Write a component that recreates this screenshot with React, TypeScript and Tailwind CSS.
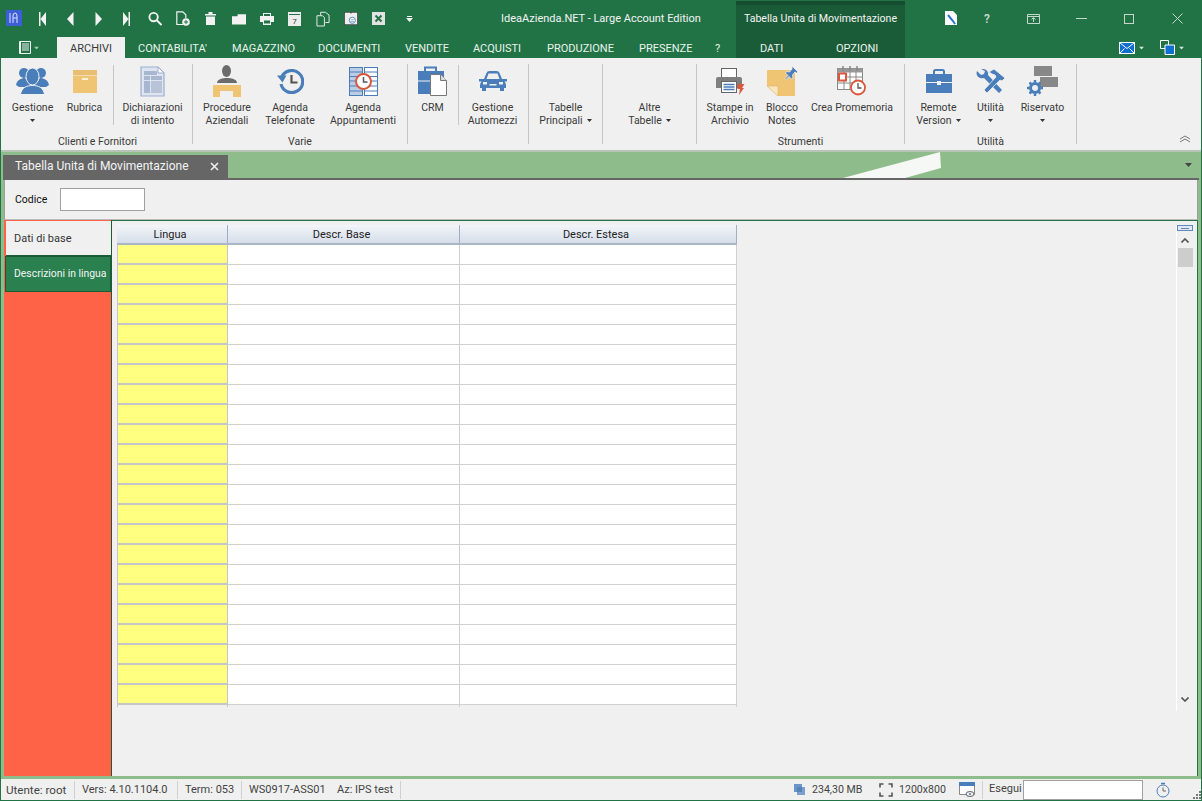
import React from "react";

const F = "font-['Roboto','Noto_Sans',sans-serif]";

const Caret = ({ className = "" }: { className?: string }) => (
  <svg width="7" height="4" viewBox="0 0 7 4" className={className}><path d="M0 0h7L3.5 4z" fill="currentColor" /></svg>
);

const Blue = "#4a7eba";

const IconPeople = () => (
  <svg width="33" height="28" viewBox="0 0 33 28">
    <g fill={Blue}>
      <circle cx="8" cy="6" r="5" /><circle cx="25" cy="6" r="5" />
      <path d="M0 18c1-5 5-7 9-7l7 7v2H3zM33 18c-1-5-5-7-9-7l-7 7v2h13z" />
      <path d="M4.500 27.500c1-7 6-9 12-9s11 2 12 9z" stroke="#f0f0f0" strokeWidth="1" />
      <ellipse cx="16.500" cy="9.500" rx="6.500" ry="8.500" stroke="#f0f0f0" strokeWidth="1" />
    </g>
  </svg>
);
const IconBox = () => (
  <svg width="24" height="23" viewBox="0 0 24 23">
    <rect width="24" height="5" fill="#e8be70" />
    <rect width="24" height="18" y="5.500" fill="#efc574" />
    <rect width="6" height="2" x="9" y="8" fill="#fbf0dc" />
  </svg>
);
const IconDoc = () => (
  <svg width="25" height="31" viewBox="0 0 25 31">
    <path d="M1 1h17l6 6v23H1z" fill="#dfe4f1" stroke="#9fadcc" strokeWidth="1.200" />
    <path d="M18 1v6h6z" fill="#fff" stroke="#9fadcc" />
    <rect x="4" y="5" width="13" height="4" fill="#a9b6d0" />
    <rect x="4" y="10" width="6" height="4" fill="#a9b6d0" /><rect x="11" y="10" width="11" height="4" fill="#a9b6d0" />
    <rect x="4" y="15" width="6" height="12" fill="#a9b6d0" /><rect x="11" y="15" width="11" height="12" fill="#b8c3da" />
  </svg>
);
const IconDesk = () => (
  <svg width="29" height="32" viewBox="0 0 29 32">
    <ellipse cx="13.500" cy="6" rx="4.500" ry="6" fill="#6b6b6b" />
    <path d="M4 18c0-4 6-5 10-5s10 1 10 5z" fill="#6b6b6b" />
    <path d="M0 20h28v12H20v-6H7v6H0z" fill="#efc574" />
  </svg>
);
const IconHistory = () => (
  <svg width="27" height="25" viewBox="0 0 27 25">
    <path d="M4.500 8.500A11 11 0 1 1 4 15" fill="none" stroke={Blue} strokeWidth="3.200" />
    <path d="M0 6.500h9.500l-4 7z" fill={Blue} />
    <path d="M14.500 6v7.500h6" fill="none" stroke="#555" strokeWidth="2.200" />
  </svg>
);
const IconAppt = () => (
  <svg width="29" height="29" viewBox="0 0 29 29">
    <rect x=".5" y=".5" width="13" height="28" fill="#bccce4" stroke={Blue} />
    <rect x="15.500" y=".5" width="13" height="28" fill="#fff" stroke={Blue} />
    <path d="M.5 5h13M.5 9.500h13M.5 14h13M.5 19h13M.5 24h13M15.500 5h13M15.500 9.500h13M15.500 14h13M15.500 19h13M15.500 24h13" stroke={Blue} />
    <circle cx="14.500" cy="14.500" r="7.500" fill="#fff" stroke="#d9573c" strokeWidth="2" />
    <path d="M14.500 10v5h4" fill="none" stroke="#555" strokeWidth="1.500" />
  </svg>
);
const IconCrm = () => (
  <svg width="29" height="30" viewBox="0 0 29 30">
    <path d="M7 5V1.500h11V5" fill="none" stroke={Blue} strokeWidth="2" />
    <rect x="0" y="5" width="26" height="23" fill={Blue} />
    <path d="M12.500 8.500h10l6 6v15h-16z" fill="#fff" stroke="#777" />
    <path d="M22.500 8.500v6h6" fill="#ddd" stroke="#777" />
    <path d="M0 15h12" stroke="#f0f0f0" />
  </svg>
);
const IconCar = () => (
  <svg width="28" height="20" viewBox="0 0 28 20">
    <path d="M5 8l2.500-6q.5-2 3-2h7q2.500 0 3 2L23 8h5v2.500h-2.500Q27 12 27 14v3h-2v3h-4v-3H7v3H3v-3H1v-3q0-1.500 1.500-3.500H0V8z" fill={Blue} />
    <path d="M7.500 8l2-5.500h9l2 5.500z" fill="#f0f0f0" />
    <rect x="4" y="11" width="4" height="2.500" fill="#f0f0f0" /><rect x="20" y="11" width="4" height="2.500" fill="#f0f0f0" /><rect x="10.500" y="13" width="7" height="1.500" fill="#f0f0f0" />
  </svg>
);
const IconPrinter = () => (
  <svg width="29" height="27" viewBox="0 0 29 27">
    <rect x="5.500" y=".5" width="15" height="9" fill="#fff" stroke="#666" />
    <path d="M0 11q0-2 2-2h22q2 0 2 2v9H0z" fill="#7f7f7f" />
    <rect x="5.500" y="13.500" width="15" height="11" fill="#fff" stroke="#666" />
    <path d="M7.500 16.500h11M7.500 19h11M7.500 21.500h11" stroke={Blue} strokeWidth="1.300" />
    <path d="M21.500 16h7l-2.500 4h2l-5 7 1-6h-2.500z" fill="#d9573c" />
  </svg>
);
const IconNote = () => (
  <svg width="31" height="31" viewBox="0 0 31 31">
    <path d="M0 4h28v26H11L0 20z" fill="#efc574" />
    <path d="M11 30V20H0z" fill="#f8e6c0" stroke="#e0b566" strokeWidth=".6" />
    <path d="M25 0l6 6-1.500 1-1.500-1-2.500 3 .5 3-1.500 1-2.500-2.500-3 3-1-1 3-3-2.500-2.500 1-1.500 3 .5 2.500-3z" fill={Blue} stroke="#f0f0f0" strokeWidth=".8" />
  </svg>
);
const IconCal = () => (
  <svg width="30" height="30" viewBox="0 0 30 30">
    <rect x=".5" y="2.500" width="25" height="21" fill="#fff" stroke="#888" />
    <rect x=".5" y="2.500" width="25" height="4" fill="#999" />
    <path d="M6 0v5M13 0v5M20 0v5" stroke="#888" strokeWidth="1.500" />
    <path d="M.5 11h25M.5 17h25M7 6v18M13 6v18M19 6v18" stroke="#888" />
    <rect x="2" y="7.500" width="7" height="7" fill="#fff" stroke="#d9573c" strokeWidth="2" />
    <circle cx="21" cy="21.500" r="7" fill="#fff" stroke="#d9573c" strokeWidth="1.800" />
    <path d="M21 17v5h3.500" fill="none" stroke="#555" strokeWidth="1.300" />
  </svg>
);
const IconCase = () => (
  <svg width="26" height="24" viewBox="0 0 26 24">
    <path d="M8 5V2.500q0-1.500 1.500-1.500h7Q18 1 18 2.500V5" fill="none" stroke={Blue} strokeWidth="2" />
    <path d="M0 5h26v8H15v-1h-4v1H0zM0 14h11v2h4v-2h11v10H0z" fill={Blue} />
  </svg>
);
const IconTools = () => (
  <svg width="29" height="25" viewBox="0 0 29 25">
    <path d="M1 2l4 4 3-1 1-3-4-2C9-1 13 2 12 6l14 15-3 3L8 9C4 10-1 7 1 2z" fill={Blue} />
    <path d="M13 3l5-3 11 9-3 3-2-1-13 13-3-3 12-13-1-2-3-1z" fill={Blue} stroke="#f0f0f0" strokeWidth=".8" />
  </svg>
);
const IconReserved = () => (
  <svg width="32" height="30" viewBox="0 0 32 30">
    <rect x="7" y="0" width="18" height="10" fill="#888" />
    <rect x="13" y="11" width="18" height="10" fill="#888" />
    <circle cx="8" cy="22" r="4.500" fill="#f0f0f0" stroke={Blue} strokeWidth="3" />
    <path d="M8 14v2.500M8 27.500V30M0 22h2.500M13.500 22H16M2.500 16.500l2 2M11.500 25.500l2 2M2.500 27.500l2-2M11.500 18.500l2-2" stroke={Blue} strokeWidth="2.500" />
  </svg>
);

const W = "#f2f2f2";
const QA: React.ReactNode[] = [
  <svg width="7" height="14" viewBox="0 0 7 14"><path d="M0 0h1.500v14H0zM7 0v14L1.500 7z" fill={W} /></svg>,
  <svg width="7" height="14" viewBox="0 0 7 14"><path d="M6.500 0v14L0 7z" fill={W} /></svg>,
  <svg width="7" height="14" viewBox="0 0 7 14"><path d="M.5 0v14L7 7z" fill={W} /></svg>,
  <svg width="7" height="14" viewBox="0 0 7 14"><path d="M5.500 0H7v14H5.500zM0 0v14l5.500-7z" fill={W} /></svg>,
  <svg width="15" height="15" viewBox="0 0 15 15"><circle cx="6" cy="6" r="4.500" fill="none" stroke={W} strokeWidth="2" /><path d="M9.500 9.500L14.500 14.500" stroke={W} strokeWidth="2.200" /></svg>,
  <svg width="14" height="15" viewBox="0 0 14 15"><path d="M7 13.500H.8V.8h6l3 3V7" fill="none" stroke={W} strokeWidth="1.200" /><circle cx="10" cy="11" r="3.800" fill={W} /><path d="M8 11h4M10 9v4" stroke="#217346" /></svg>,
  <svg width="11" height="13" viewBox="0 0 11 13"><path d="M0 2h11v1.500H0zM3.500 0h4v2h-4zM1 4.500h9V13H1z" fill={W} /></svg>,
  <svg width="15" height="12" viewBox="0 0 15 12"><path d="M0 3h6V1h9v11H0z" fill={W} /></svg>,
  <svg width="14" height="12" viewBox="0 0 14 12"><path d="M3 0h8v3h3v6h-3v3H3V9H0V3h3z" fill={W} /><path d="M4 7.500h6v3H4zM4 1h6v2H4z" fill="#217346" /></svg>,
  <svg width="13" height="14" viewBox="0 0 13 14"><path d="M0 0h13v14H0z" fill="#ececec" /><path d="M1 2.500h11" stroke="#217346" /><text x="6.500" y="11.500" fontSize="7.500" textAnchor="middle" fill="#333">7</text></svg>,
  <svg width="15" height="16" viewBox="0 0 15 16"><path d="M1 4.500h6l2 2v9H1z M5 4V.8h5l4 3v8h-4" fill="none" stroke={W} /></svg>,
  <svg width="16" height="15" viewBox="0 0 16 15"><rect width="16" height="15" fill="#444" /><path d="M1 1h6l1 1 1-1h6v13H1z" fill="#eee" /><circle cx="9.500" cy="9.500" r="3.500" fill="#fff" stroke={Blue} /><path d="M7.500 9h4M7.500 11h4" stroke={Blue} strokeWidth=".7" /></svg>,
  <svg width="13" height="13" viewBox="0 0 13 13"><rect width="13" height="13" fill="#e2e2e2" /><path d="M3.500 3.500l6 6M9.500 3.500l-6 6" stroke="#217346" strokeWidth="2" /></svg>,
];

const RC = "text-[#333] w-[5px] h-[3px]";

type BtnProps = { w: number; icon: React.ReactNode; l1: string; l2?: string; caret?: boolean };
const Btn = ({ w, icon, l1, l2, caret }: BtnProps) => (
  <div className="flex flex-col items-center shrink-0" style={{ width: w }}>
    <div className="h-[34px] flex items-center justify-center">{icon}</div>
    <div className="h-[13px] mt-[3px] leading-[13px] whitespace-nowrap">{l1}</div>
    <div className="h-[13px] leading-[13px] whitespace-nowrap flex items-center justify-center gap-[4px]">
      {l2 && <span>{l2}</span>}
      {caret && <Caret className={RC} />}
    </div>
  </div>
);
const TextBtn = ({ w, l1, l2 }: { w: number; l1: string; l2: string }) => (
  <div className="flex flex-col items-center shrink-0" style={{ width: w }}>
    <div className="h-[13px] mt-[37px] leading-[13px]">{l1}</div>
    <div className="h-[13px] leading-[13px] flex items-center gap-[4px]"><span>{l2}</span><Caret className={RC} /></div>
  </div>
);
const Sep = ({ className = "" }: { className?: string }) => <div className={`w-px h-[60px] mt-px bg-[#c6c6c6] shrink-0 ${className}`} />;
const Group = ({ w, label, children }: { w: number; label?: string; children: React.ReactNode }) => (
  <div className="flex flex-col shrink-0 border-r border-[#c6c6c6] mt-[6px] h-[80px]" style={{ width: w }}>
    <div className="flex h-[70px] shrink-0">{children}</div>
    <div className="h-[10px] leading-[15px] text-center">{label}</div>
  </div>
);

const Cols = ["w-[111px]", "w-[232px]", "w-[277px]"];

export default function App() {
  return (
    <div className={`${F} w-[1202px] h-[801px] overflow-hidden bg-[#217346] text-[11px] text-[#3a3a3a] flex flex-col`}>
      {/* title bar */}
      <div className="h-[37px] flex bg-[#217346] text-[#f4f4f4] shrink-0">
        <svg width="16" height="16" viewBox="0 0 16 16" className="ml-[6px] mt-[10px] shrink-0">
          <rect width="16" height="16" fill="#3d5fd6" />
          <path d="M4 3v10M7 13V6q0-3 2-3t2 3v7M7 8h4" fill="none" stroke="#dfe6ff" />
        </svg>
        <div className="flex items-center gap-[13px] h-[37px] ml-[13px] w-[381px] shrink-0">
          {QA.map((q, i) => (
            <span key={i} className="w-[14px] flex justify-center shrink-0 mx-[0.5px]">{q}</span>
          ))}
          <svg width="7" height="6" viewBox="0 0 7 6" className="ml-[7px] shrink-0"><path d="M1 0h5v1H1zM0 2h7L3.500 6z" fill={W} /></svg>
        </div>
        <div className="w-[320px] pl-[85px] leading-[37px] whitespace-nowrap shrink-0">IdeaAzienda.NET - Large Account Edition</div>
        <div className="w-[169px] h-[36px] mt-px bg-[#1b5c38] border-t-[4px] border-[#174d2f] text-center text-[10.6px] leading-[27px] whitespace-nowrap shrink-0">Tabella Unita di Movimentazione</div>
        <div className="flex-1 flex items-center text-[#c5d8cc] h-[37px]">
          <svg width="13" height="15" viewBox="0 0 13 15" className="ml-[40px]"><path d="M0 0h8l4 4v10H0z" fill="#fff" /><path d="M3 4l5 6 2 3" stroke="#2f6fd0" strokeWidth="2" fill="none" /></svg>
          <span className="ml-[24px] w-[10px] text-center text-[12px] font-semibold">?</span>
          <svg width="13" height="10" viewBox="0 0 13 10" className="ml-[35px]"><path d="M.5.5h12v9H.5zM.5 2.500h12" fill="none" stroke="#c5d8cc" /><path d="M6.500 8V4M4.500 5.500l2-2 2 2" fill="none" stroke="#c5d8cc" /></svg>
          <div className="ml-[36px] w-[11px] h-px bg-[#c5d8cc]" />
          <div className="ml-[37px] w-[10px] h-[10px] border border-[#c5d8cc]" />
          <svg width="11" height="11" viewBox="0 0 11 11" className="ml-[38px]"><path d="M.5.5l10 10M10.500.5l-10 10" stroke="#c5d8cc" /></svg>
        </div>
      </div>
      {/* tab row */}
      <div className="h-[21px] flex text-[#eaf3ec] shrink-0 leading-[23px]">
        <div className="w-[57px] flex items-center pl-[19px] gap-[2px] shrink-0">
          <svg width="12" height="13" viewBox="0 0 12 13"><path d="M.5.5h11v12H.5z" fill="none" stroke="#f2f2f2" /><path d="M3 3h7M3 5h7M3 7h7M3 9h7" stroke="#f2f2f2" /><path d="M1 1h1v11H1z" fill="#f2f2f2" /></svg>
          <Caret className="text-[#a9c8b5] scale-75" />
        </div>
        <div className="w-[68px] bg-[#f0f0f0] text-[#3a3a3a] text-center shrink-0">ARCHIVI</div>
        <span className="ml-[13px] whitespace-nowrap shrink-0 w-[94px]">CONTABILITA'</span>
        <span className="whitespace-nowrap shrink-0 w-[86px]">MAGAZZINO</span>
        <span className="whitespace-nowrap shrink-0 w-[87px]">DOCUMENTI</span>
        <span className="whitespace-nowrap shrink-0 w-[68px]">VENDITE</span>
        <span className="whitespace-nowrap shrink-0 w-[74px]">ACQUISTI</span>
        <span className="whitespace-nowrap shrink-0 w-[92px]">PRODUZIONE</span>
        <span className="whitespace-nowrap shrink-0 w-[76px]">PRESENZE</span>
        <span className="whitespace-nowrap shrink-0 w-[21px]">?</span>
        <div className="w-[169px] bg-[#1b5c38] flex shrink-0">
          <span className="ml-[24px] w-[76px]">DATI</span>
          <span>OPZIONI</span>
        </div>
        <div className="flex-1 flex items-center justify-end pr-[17px]">
          <svg width="16" height="12" viewBox="0 0 16 12"><rect x=".5" y=".5" width="15" height="11" fill="#0f6fd0" stroke="#fff" /><path d="M.5.5l7.500 6 7.500-6M.5 11.500l5-5M15.500 11.500l-5-5" stroke="#fff" fill="none" /></svg>
          <Caret className="text-[#d7e5dc] ml-[3px] scale-75" />
          <svg width="15" height="15" viewBox="0 0 15 15" className="ml-[15px]"><path d="M.5.5h8v8h-8z" fill="#217346" stroke="#fff" /><path d="M5 5h9.500v9.500H5z" fill="#0f6fd0" stroke="#fff" /></svg>
          <Caret className="text-[#d7e5dc] ml-[3px] scale-75" />
        </div>
      </div>
      {/* ribbon */}
      <div className="h-[94px] mx-px bg-[#f0f0f0] flex shrink-0 relative pl-[2px] border-b-[2px] border-[#b8c4b8] text-[10.5px]">
        <Group w={190} label="Clienti e Fornitori">
          <Btn w={59} icon={<IconPeople />} l1="Gestione" caret />
          <Btn w={45} icon={<IconBox />} l1="Rubrica" />
          <Sep className="ml-[6px]" />
          <Btn w={77} icon={<IconDoc />} l1="Dichiarazioni" l2="di intento" />
        </Group>
        <Group w={215} label="Varie">
          <Btn w={68} icon={<IconDesk />} l1="Procedure" l2="Aziendali" />
          <Btn w={58} icon={<IconHistory />} l1="Agenda" l2="Telefonate" />
          <Btn w={88} icon={<IconAppt />} l1="Agenda" l2="Appuntamenti" />
        </Group>
        <Group w={121}>
          <Btn w={49} icon={<IconCrm />} l1="CRM" />
          <Sep className="ml-px" />
          <Btn w={67} icon={<IconCar />} l1="Gestione" l2="Automezzi" />
        </Group>
        <Group w={74}><TextBtn w={73} l1="Tabelle" l2="Principali" /></Group>
        <Group w={94}><TextBtn w={93} l1="Altre" l2="Tabelle" /></Group>
        <Group w={208} label="Strumenti">
          <Btn w={66} icon={<IconPrinter />} l1="Stampe in" l2="Archivio" />
          <Btn w={38} icon={<IconNote />} l1="Blocco" l2="Notes" />
          <Btn w={102} icon={<IconCal />} l1="Crea Promemoria" />
        </Group>
        <Group w={172} label="Utilità">
          <Btn w={67} icon={<IconCase />} l1="Remote" l2="Version" caret />
          <Btn w={37} icon={<IconTools />} l1="Utilità" caret />
          <Btn w={67} icon={<IconReserved />} l1="Riservato" caret />
        </Group>
        <svg width="12" height="8" viewBox="0 0 12 8" className="absolute right-[10px] bottom-[7px]"><path d="M1 4l5-3 5 3M1 7l5-3 5 3" fill="none" stroke="#777" /></svg>
      </div>
      {/* document area */}
      <div className="flex-1 mx-px bg-[#8fbc8b] flex flex-col min-h-0">
        <div className="h-[26px] flex items-end shrink-0 pl-[2px] relative">
          <div className="w-[225px] h-[23px] bg-[#666666] text-[#f4f4f4] text-[12px] leading-[23px] pl-[12px] pr-[9px] flex items-center justify-between">
            <span className="whitespace-nowrap">Tabella Unita di Movimentazione</span>
            <svg width="9" height="9" viewBox="0 0 9 9"><path d="M1 1l7 7M8 1L1 8" stroke="#eee" strokeWidth="1.600" /></svg>
          </div>
          <svg width="98" height="26" viewBox="0 0 98 26" className="absolute left-[842px] top-0"><path d="M97 0l1 16-36 10H0z" fill="#f5f8f5" /></svg>
          <Caret className="absolute right-[9px] top-[11px] text-[#444]" />
        </div>
        <div className="h-[2px] bg-[#666666] shrink-0 mx-[2px]" />
        <div className="flex-1 flex flex-col mx-[3px] mb-[3px] min-h-0">
          <div className="h-[40px] bg-[#f0f0f0] border-x border-[#9d9d9d] flex items-center pl-[10px] shrink-0 border-b border-b-[#bbb]">
            <span className="text-[#111] w-[45px] text-[10.5px]">Codice</span>
            <div className="w-[85px] h-[23px] bg-white border border-[#a0a0a0]" />
          </div>
          <div className="flex-1 flex min-h-0 bg-[#f0f0f0] border-r border-r-[#217346]">
            <div className="w-[108px] bg-[#ff6347] border-r border-[#1b5c38] shrink-0 flex flex-col leading-none pt-px">
              <div className="h-[35px] bg-[#f0f0f0] -mr-px border-r border-b border-[#1b5c38] pl-[8px] flex items-center ml-[2px] text-[#333]">Dati di base</div>
              <div className="h-[36px] bg-[#2b8050] text-[#f4f4f4] border border-[#1b5c38] pl-[8px] flex items-center whitespace-nowrap ml-px text-[10.4px]">Descrizioni in lingua</div>
            </div>
            <div className="flex-1 flex pl-[5px] pt-[4px] min-w-0 border-t border-[#217346]">
              <div className="w-[620px]">
                <div className="flex h-[20px] text-[#222] leading-[20px] text-center border-b-2 border-[#a9b6c8] bg-gradient-to-b from-[#f2f5f9] to-[#d6deea]">
                  {["Lingua", "Descr. Base", "Descr. Estesa"].map((h, i) => (
                    <div key={h} className={`${Cols[i]} border-r border-[#9db0c6] shrink-0 pr-[4px]`}>{h}</div>
                  ))}
                </div>
                {Array.from({ length: 23 }).map((_, i) => (
                  <div key={i} className="flex h-[20px]">
                    <div className={`${Cols[0]} bg-[#ffff80] border-b-2 border-x border-[#c6c6c6] shrink-0`} />
                    <div className={`${Cols[1]} bg-white border-b border-r border-[#d0d0d0] shrink-0`} />
                    <div className={`${Cols[2]} bg-white border-b border-r border-[#d0d0d0] shrink-0`} />
                  </div>
                ))}
                <div className="flex h-[2px]">
                  <div className={`${Cols[0]} border-x border-[#c6c6c6]`} />
                  <div className={`${Cols[1]} border-r border-[#d0d0d0]`} />
                  <div className={`${Cols[2]} border-r border-[#d0d0d0]`} />
                </div>
              </div>
              <div className="flex-1" />
              <div className="w-[17px] mr-[4px] flex flex-col items-center h-[486px] border-l border-white">
                <div className="w-[16px] h-[6px] bg-[#dfe8f4] border border-[#5f88bb] flex items-center justify-center"><div className="w-[8px] h-px bg-[#5f88bb]" /></div>
                <svg width="8" height="5" viewBox="0 0 8 5" className="mt-[7px]"><path d="M.5 4.500L4 1l3.500 3.500" fill="none" stroke="#555" strokeWidth="1.600" /></svg>
                <div className="w-[15px] h-[19px] bg-[#cdcdcd] mt-[5px]" />
                <div className="flex-1" />
                <svg width="8" height="5" viewBox="0 0 8 5" className="mb-[9px]"><path d="M.5.500L4 4l3.500-3.500" fill="none" stroke="#555" strokeWidth="1.600" /></svg>
              </div>
            </div>
          </div>
        </div>
      </div>
      {/* status bar */}
      <div className="h-[21px] mx-px mb-px bg-[#f0f0f0] flex items-center shrink-0 text-[#444] whitespace-nowrap">
        <div className="w-[74px] pl-[5px] border-r border-[#d0d0d0] h-[18px] leading-[18px] shrink-0 text-[11.6px]">Utente: root</div>
        <div className="w-[103px] pl-[7px] border-r border-[#d0d0d0] h-[18px] leading-[18px] shrink-0">Vers: 4.10.1104.0</div>
        <div className="w-[64px] pl-[7px] border-r border-[#d0d0d0] h-[18px] leading-[18px] shrink-0">Term: 053</div>
        <div className="w-[95px] pl-[7px] h-[18px] leading-[18px] shrink-0">WS0917-ASS01</div>
        <div className="w-[64px] border-r border-[#d0d0d0] h-[18px] leading-[18px] shrink-0">Az: IPS test</div>
        <div className="flex-1" />
        <svg width="12" height="12" viewBox="0 0 12 12" className="mr-[6px]"><rect width="8" height="8" fill={Blue} opacity=".8" /><rect x="3" y="3" width="8" height="8" fill={Blue} opacity=".7" /></svg>
        <span className="w-[67px] text-[10.6px]">234,30 MB</span>
        <svg width="14" height="14" viewBox="0 0 14 14" className="mr-[6px]"><path d="M1 4.500V1h3.500M9.500 1H13v3.500M13 9.500V13H9.500M4.500 13H1V9.500" fill="none" stroke="#555" strokeWidth="1.600" /></svg>
        <span className="w-[60px] text-[10.6px]">1200x800</span>
        <svg width="16" height="15" viewBox="0 0 16 15" className="mr-[7px]"><path d="M.5.5h15v12H.5z" fill="#fff" stroke="#888" /><rect width="16" height="4" fill={Blue} /><ellipse cx="11" cy="12" rx="4" ry="2.500" fill="#eee" stroke="#666" /><circle cx="11" cy="12" r="1" fill={Blue} /></svg>
        <div className="w-px h-[18px] bg-[#d0d0d0] mr-[6px]" />
        <span className="w-[34px]">Esegui</span>
        <div className="w-[120px] h-[20px] bg-white border border-[#a0a0a0] mr-[13px]" />
        <svg width="14" height="16" viewBox="0 0 14 16" className="mr-[23px]"><circle cx="7" cy="9" r="6" fill="none" stroke={Blue} /><path d="M7 5.500V9h3" fill="none" stroke="#666" /><path d="M5 1.500h4" stroke={Blue} strokeWidth="1.500" /></svg>
        <svg width="8" height="8" viewBox="0 0 8 8" className="self-end mb-px"><path d="M6 0h2v2H6zM3 3h2v2H3zM6 3h2v2H6zM0 6h2v2H0zM3 6h2v2H3zM6 6h2v2H6z" fill="#777" /></svg>
      </div>
    </div>
  );
}
